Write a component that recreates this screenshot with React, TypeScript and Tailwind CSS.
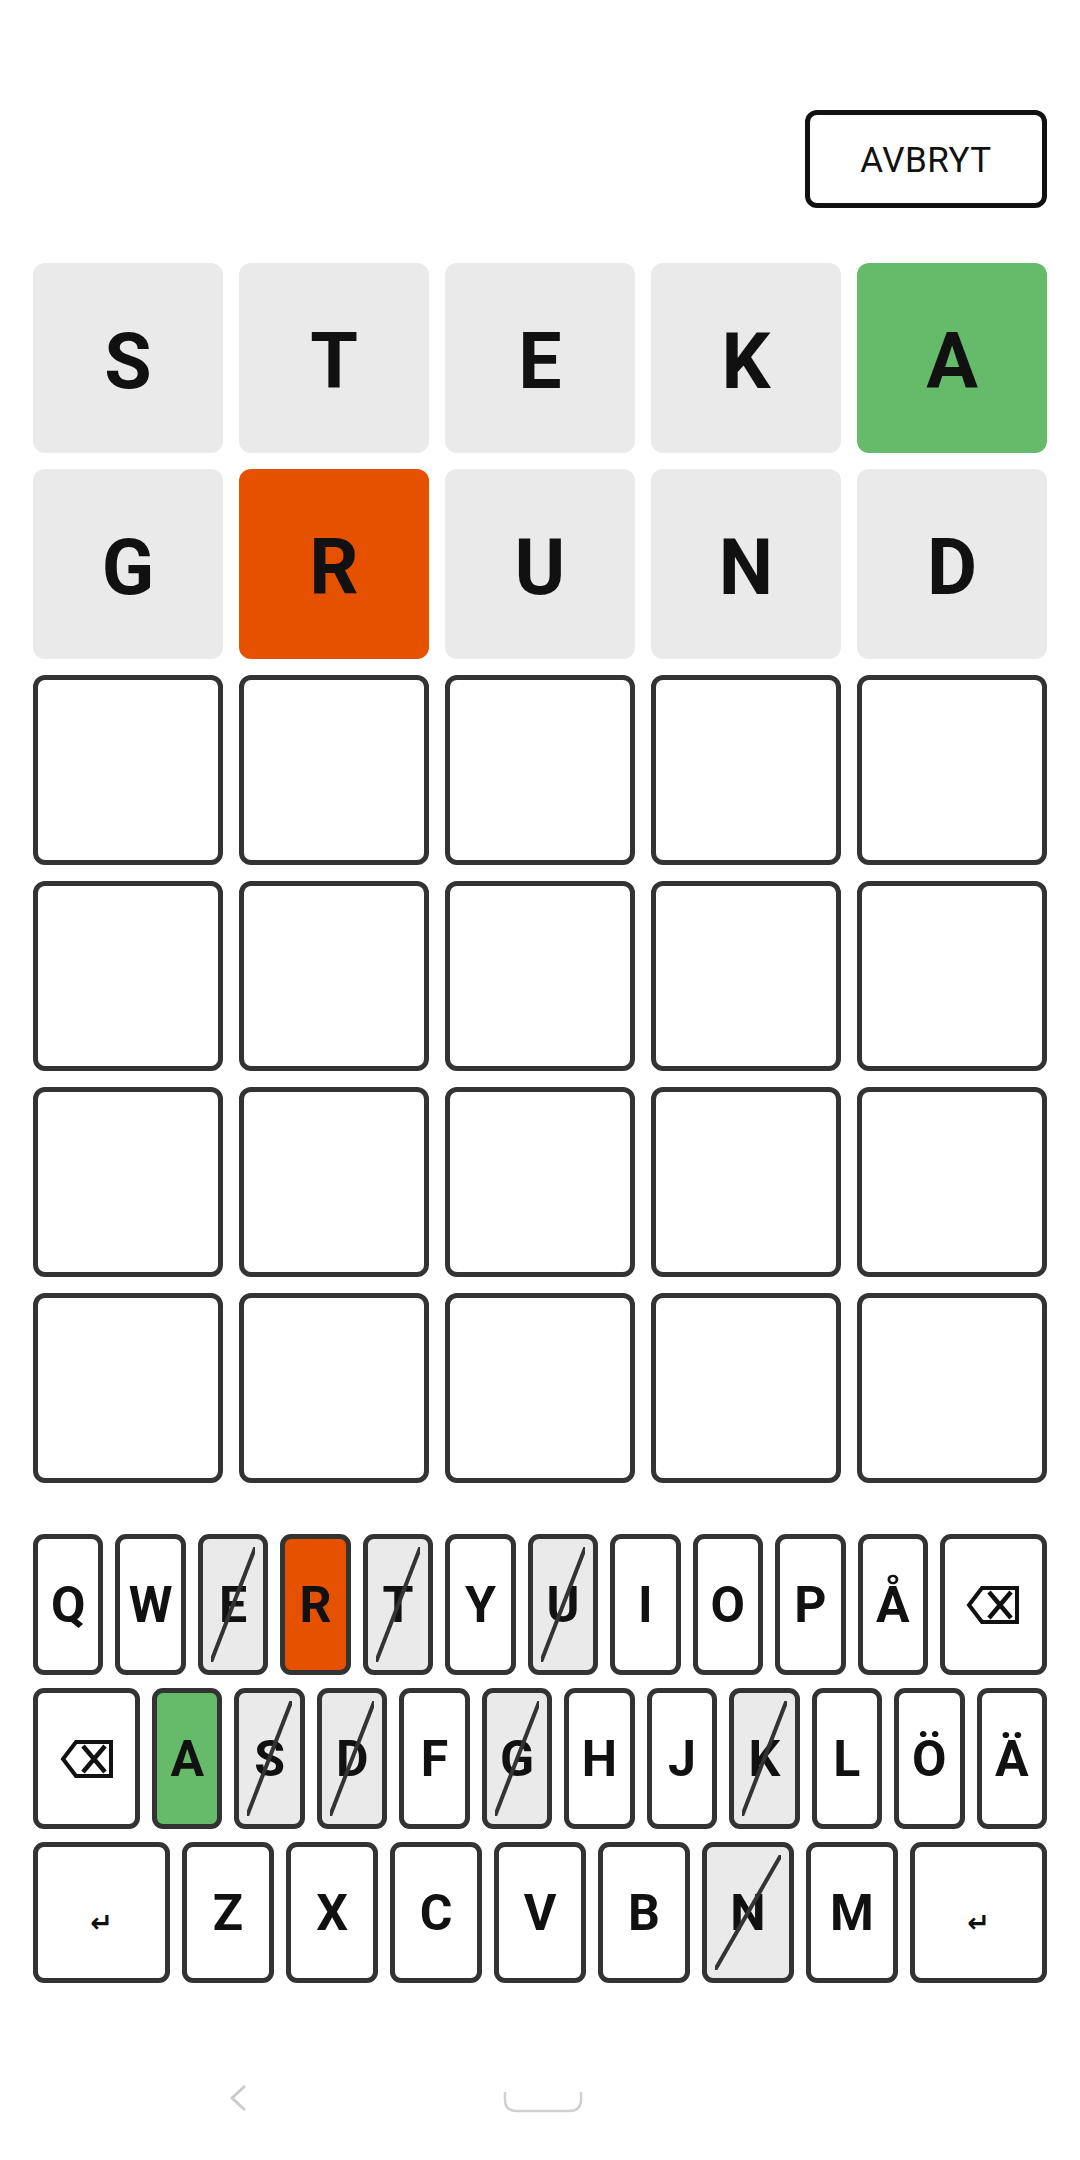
import React from "react";

type Tone = "gray" | "green" | "orange" | "empty";

const GUESSES: { letter: string; tone: Tone }[][] = [
  [
    { letter: "S", tone: "gray" },
    { letter: "T", tone: "gray" },
    { letter: "E", tone: "gray" },
    { letter: "K", tone: "gray" },
    { letter: "A", tone: "green" },
  ],
  [
    { letter: "G", tone: "gray" },
    { letter: "R", tone: "orange" },
    { letter: "U", tone: "gray" },
    { letter: "N", tone: "gray" },
    { letter: "D", tone: "gray" },
  ],
];

const EMPTY_ROWS = 4;

const KEY_ROWS: string[][] = [
  ["Q", "W", "E", "R", "T", "Y", "U", "I", "O", "P", "Å", "BACK"],
  ["BACK", "A", "S", "D", "F", "G", "H", "J", "K", "L", "Ö", "Ä"],
  ["ENTER", "Z", "X", "C", "V", "B", "N", "M", "ENTER"],
];

const USED = ["E", "T", "U", "S", "D", "G", "K", "N"];
const CORRECT = ["A"];
const MISPLACED = ["R"];

function Tile({ letter, tone }: { letter?: string; tone: Tone }) {
  const toneClass =
    tone === "green"
      ? "bg-[#66bb6a]"
      : tone === "orange"
        ? "bg-[#e65100]"
        : tone === "gray"
          ? "bg-[#eaeaea]"
          : "bg-white border-[5px] border-[#333333]";
  return (
    <div
      className={`h-[190px] rounded-[12px] flex items-center justify-center ${toneClass}`}
    >
      {letter && (
        <span className="mt-[8px] text-[77px] font-bold leading-none text-[#111111] [font-family:Roboto,sans-serif]">
          {letter}
        </span>
      )}
    </div>
  );
}

function BackspaceIcon() {
  return (
    <svg width="54" height="40" viewBox="0 0 54 40">
      <path
        d="M16 3 H51 V37 H16 L3 20 Z"
        fill="none"
        stroke="#111111"
        strokeWidth="4"
        strokeLinejoin="miter"
      />
      <path d="M23 7 L45 33 M45 7 L23 33" stroke="#111111" strokeWidth="4.5" />
    </svg>
  );
}

function Key({ label }: { label: string }) {
  const isBack = label === "BACK";
  const isEnter = label === "ENTER";
  const used = USED.includes(label);
  const bg = CORRECT.includes(label)
    ? "bg-[#66bb6a]"
    : MISPLACED.includes(label)
      ? "bg-[#e65100]"
      : used
        ? "bg-[#eaeaea]"
        : "bg-white";
  const width = isBack ? "w-[107px] shrink-0" : isEnter ? "w-[137px] shrink-0" : "flex-1";

  return (
    <div
      className={`relative h-[141px] rounded-[11px] border-[5px] border-[#333333] flex items-center justify-center ${bg} ${width}`}
    >
      {isBack ? (
        <BackspaceIcon />
      ) : isEnter ? (
        <span className="mt-[20px] text-[27px] font-bold leading-none text-[#111111] [font-family:'DejaVu_Sans',sans-serif]">
          ↵
        </span>
      ) : (
        <span className="text-[50px] font-bold leading-none text-[#111111] [font-family:Roboto,sans-serif]">
          {label}
        </span>
      )}
      {used && (
        <svg
          className="absolute inset-x-[8px] inset-y-[8px] w-[calc(100%-16px)] h-[calc(100%-16px)]"
          viewBox="0 0 100 100"
          preserveAspectRatio="none"
        >
          <line
            x1="0"
            y1="100"
            x2="100"
            y2="0"
            stroke="#333333"
            strokeWidth="4"
            vectorEffect="non-scaling-stroke"
          />
        </svg>
      )}
    </div>
  );
}

export default function App() {
  return (
    <div className="w-[1080px] h-[2160px] bg-white flex flex-col px-[33px] pt-[110px] [font-family:Roboto,sans-serif]">
      <div className="flex justify-end">
        <button className="w-[242px] h-[98px] rounded-[12px] border-[5px] border-[#111111] bg-white pt-[4px] text-[35px] text-[#111111] tracking-[0.5px]">
          AVBRYT
        </button>
      </div>

      <div className="mt-[55px] grid grid-cols-5 gap-[16px]">
        {GUESSES.flat().map((t, i) => (
          <Tile key={`g${i}`} letter={t.letter} tone={t.tone} />
        ))}
        {Array.from({ length: EMPTY_ROWS * 5 }).map((_, i) => (
          <Tile key={`e${i}`} tone="empty" />
        ))}
      </div>

      <div className="mt-[51px] flex flex-col gap-[13px]">
        {KEY_ROWS.map((row, r) => (
          <div key={r} className="flex gap-[12px]">
            {row.map((k, i) => (
              <Key key={`${r}-${i}`} label={k} />
            ))}
          </div>
        ))}
      </div>

      {/* system nav bar */}
      <div className="mt-[100px] flex items-center h-[30px]">
        <svg className="ml-[195px]" width="20" height="28" viewBox="0 0 20 28">
          <polyline
            points="17,2 4,14 17,26"
            fill="none"
            stroke="#cccccc"
            strokeWidth="3"
          />
        </svg>
        <svg className="ml-[255px] mt-[10px]" width="80" height="22" viewBox="0 0 80 22">
          <path
            d="M2 0 V8 Q2 19 14 19 H66 Q78 19 78 8 V0"
            fill="none"
            stroke="#d0d0d0"
            strokeWidth="2.5"
          />
        </svg>
      </div>
    </div>
  );
}
